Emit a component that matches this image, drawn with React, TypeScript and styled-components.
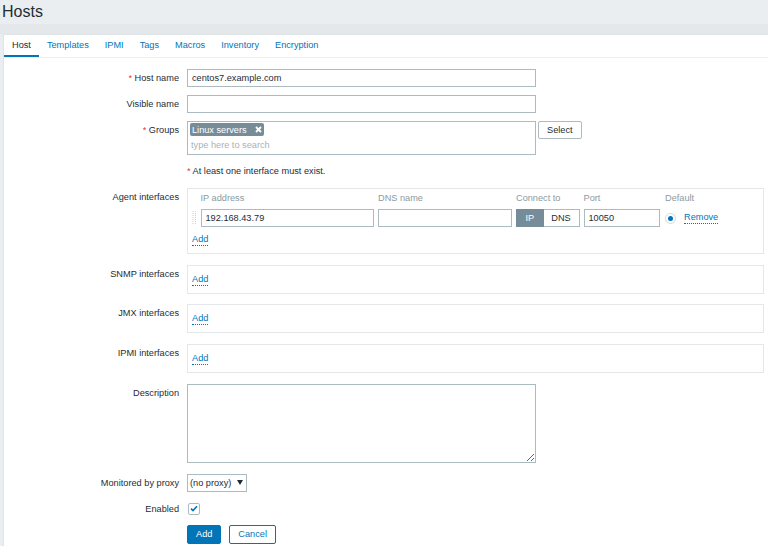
import styled, { createGlobalStyle } from "styled-components";

const BLUE = "#0275b8";
const TEXT = "#1f2c33";
const BORDER = "#acbbc2";
const SLATE = "#768d99";

const GlobalStyle = createGlobalStyle`
  html, body { margin: 0; padding: 0; }
  body {
    background: #ebeef0;
    font-family: "Liberation Sans", Arial, sans-serif;
    font-size: 9.2px;
    color: ${TEXT};
    width: 768px;
    height: 546px;
    overflow: hidden;
  }
`;

const Page = styled.div`
  display: flex;
  flex-direction: column;
  min-height: 546px;
`;

const Header = styled.h1`
  flex-shrink: 0;
  margin: 0;
  padding-left: 2px;
  height: 24px;
  line-height: 24px;
  font-size: 16px;
  font-weight: normal;
  color: ${TEXT};
`;

const Band = styled.div`
  flex-shrink: 0;
  height: 10px;
  background: #e5e8ea;
`;

const Panel = styled.div`
  flex: 1 0 auto;
  margin-left: 3px;
  background: #fff;
  border-left: 1px solid #dfe4e7;
  border-top: 1px solid #dfe4e7;
`;

const TabBar = styled.div`
  display: flex;
  height: 22px;
  border-bottom: 1px solid #ebeef0;
`;

const Tab = styled.div<{ $active?: boolean }>`
  padding: 0 8px;
  line-height: 20px;
  border-bottom: 2px solid ${(p) => (p.$active ? BLUE : "transparent")};
  color: ${(p) => (p.$active ? TEXT : BLUE)};
`;

const Form = styled.div`
  display: flex;
  flex-direction: column;
  padding-top: 11px;
`;

const Row = styled.div<{ $mb?: number }>`
  display: grid;
  grid-template-columns: 175px 1fr;
  column-gap: 8px;
  margin-bottom: ${(p) => p.$mb ?? 7.6}px;
`;

const Label = styled.div`
  text-align: right;
  line-height: 18.4px;
  white-space: nowrap;
`;

const Req = styled.span`
  color: #e33734;
`;

const TextInput = styled.input<{ $w?: number }>`
  display: block;
  box-sizing: border-box;
  width: ${(p) => p.$w ?? 349}px;
  height: ${(p) => (p.$w ? 18 : 18.4)}px;
  margin: 0;
  padding: 0 4px;
  border: 1px solid ${BORDER};
  border-radius: 0;
  background: #fff;
  font: inherit;
  color: ${TEXT};
  outline: none;
`;

const Inline = styled.div`
  display: flex;
  align-items: flex-start;
  gap: 2px;
`;

const MultiSelect = styled.div`
  box-sizing: border-box;
  width: 349px;
  height: 33.5px;
  padding: 1px 2px;
  border: 1px solid ${BORDER};
  background: #fff;
`;

const Chip = styled.span`
  display: inline-flex;
  align-items: center;
  gap: 8px;
  height: 13px;
  padding: 0 2px;
  margin-bottom: 2px;
  border-radius: 2px;
  background: ${SLATE};
  color: #fff;
`;

const Placeholder = styled.div`
  height: 14px;
  line-height: 14px;
  padding-left: 1px;
  color: #a7b3b9;
`;

const Button = styled.button<{ $primary?: boolean; $outline?: boolean }>`
  box-sizing: border-box;
  height: ${(p) => (p.$primary || p.$outline ? 19 : 18.4)}px;
  margin: 0;
  padding: 0 8px;
  border: 1px solid ${(p) => (p.$primary || p.$outline ? BLUE : BORDER)};
  border-radius: 2px;
  background: ${(p) => (p.$primary ? BLUE : "#fff")};
  color: ${(p) => (p.$primary ? "#fff" : p.$outline ? BLUE : TEXT)};
  font: inherit;
  line-height: 16px;
`;

const Note = styled.div`
  line-height: 18.4px;
`;

const IfaceBox = styled.div<{ $full?: boolean }>`
  box-sizing: border-box;
  width: 577px;
  height: ${(p) => (p.$full ? 66 : 29)}px;
  padding: ${(p) => (p.$full ? "3px 4px 7px" : "8px 4px 0")};
  border: 1px solid #e4e8ea;
  background: #fff;
`;

const IfaceGrid = styled.div`
  display: grid;
  grid-template-columns: 4.5px 173.5px 134px 63.5px 76.5px auto;
  column-gap: 4px;
  row-gap: 5px;
  align-items: center;
  margin-bottom: 7px;
`;

const Th = styled.div<{ $pl?: number }>`
  padding-left: ${(p) => p.$pl ?? 0}px;
  line-height: 12px;
  color: #8b9aa1;
  white-space: nowrap;
`;

const AddLink = styled.span`
  display: inline-block;
  line-height: 11px;
  color: ${BLUE};
  border-bottom: 1px dotted ${BLUE};
`;

const Toggle = styled.div`
  display: flex;
  height: 18px;
`;

const ToggleOpt = styled.div<{ $on?: boolean }>`
  box-sizing: border-box;
  display: flex;
  align-items: center;
  justify-content: center;
  width: ${(p) => (p.$on ? "27.5px" : "auto")};
  flex: ${(p) => (p.$on ? "none" : 1)};
  border: 1px solid ${(p) => (p.$on ? SLATE : BORDER)};
  border-left-width: ${(p) => (p.$on ? 1 : 0)}px;
  background: ${(p) => (p.$on ? SLATE : "#fff")};
  color: ${(p) => (p.$on ? "#fff" : TEXT)};
`;

const DefaultCell = styled.div`
  display: flex;
  align-items: center;
  gap: 8px;
  padding-left: 1px;
`;

const Radio = styled.span`
  position: relative;
  box-sizing: border-box;
  width: 11px;
  height: 11px;
  border: 1px solid #d3dade;
  border-radius: 50%;
  background: #fff;
  &::after {
    content: "";
    position: absolute;
    left: 2px;
    top: 2px;
    width: 5px;
    height: 5px;
    border-radius: 50%;
    background: ${BLUE};
  }
`;

const TextArea = styled.textarea`
  display: block;
  box-sizing: border-box;
  width: 349px;
  height: 79px;
  margin: 0;
  border: 1px solid ${BORDER};
  border-radius: 0;
  resize: both;
  font: inherit;
  outline: none;
`;

const Dropdown = styled.div`
  box-sizing: border-box;
  display: flex;
  align-items: center;
  justify-content: space-between;
  width: 60px;
  height: 18.4px;
  padding: 0 3px 0 2px;
  border: 1px solid ${BORDER};
  background: #fff;
`;

const CheckCell = styled.div`
  display: flex;
  align-items: center;
  height: 18.4px;
`;

const Checkbox = styled.span`
  box-sizing: border-box;
  display: flex;
  align-items: center;
  justify-content: center;
  width: 11.5px;
  height: 11.5px;
  margin-left: 1px;
  border: 1px solid ${BORDER};
  border-radius: 2px;
  background: #fff;
`;

const Buttons = styled.div`
  display: flex;
  gap: 8px;
`;

const tabs = ["Host", "Templates", "IPMI", "Tags", "Macros", "Inventory", "Encryption"];

const DragHandle = () => (
  <svg width="5" height="14" viewBox="0 0 5 14">
    {[0, 1, 2, 3, 4, 5, 6].map((i) => (
      <g key={i} fill="#c8cfd3">
        <rect x="0.5" y={i * 2} width="1" height="1" />
        <rect x="3" y={i * 2} width="1" height="1" />
      </g>
    ))}
  </svg>
);

const Cross = () => (
  <svg width="7" height="7" viewBox="0 0 7 7">
    <path d="M1 1L6 6M6 1L1 6" stroke="#fff" strokeWidth="1.8" />
  </svg>
);

const EmptyIface = () => (
  <IfaceBox>
    <AddLink>Add</AddLink>
  </IfaceBox>
);

export default function App() {
  return (
    <Page>
      <GlobalStyle />
      <Header>Hosts</Header>
      <Band />
      <Panel>
        <TabBar>
          {tabs.map((t, i) => (
            <Tab key={t} $active={i === 0}>
              {t}
            </Tab>
          ))}
        </TabBar>

        <Form>
          <Row>
            <Label>
              <Req>*</Req> Host name
            </Label>
            <TextInput readOnly value="centos7.example.com" />
          </Row>

          <Row>
            <Label>Visible name</Label>
            <TextInput readOnly value="" />
          </Row>

          <Row>
            <Label>
              <Req>*</Req> Groups
            </Label>
            <Inline>
              <MultiSelect>
                <Chip>
                  Linux servers
                  <Cross />
                </Chip>
                <Placeholder>type here to search</Placeholder>
              </MultiSelect>
              <Button>Select</Button>
            </Inline>
          </Row>

          <Row>
            <Label />
            <Note>
              <Req>*</Req> At least one interface must exist.
            </Note>
          </Row>

          <Row $mb={11}>
            <Label>Agent interfaces</Label>
            <IfaceBox $full>
              <IfaceGrid>
                <span />
                <Th>IP address</Th>
                <Th>DNS name</Th>
                <Th>Connect to</Th>
                <Th>Port</Th>
                <Th $pl={1}>Default</Th>

                <DragHandle />
                <TextInput $w={173.5} readOnly value="192.168.43.79" />
                <TextInput $w={134} readOnly value="" />
                <Toggle>
                  <ToggleOpt $on>IP</ToggleOpt>
                  <ToggleOpt>DNS</ToggleOpt>
                </Toggle>
                <TextInput $w={76.5} readOnly value="10050" />
                <DefaultCell>
                  <Radio />
                  <AddLink>Remove</AddLink>
                </DefaultCell>
              </IfaceGrid>
              <AddLink>Add</AddLink>
            </IfaceBox>
          </Row>

          <Row $mb={10}>
            <Label>SNMP interfaces</Label>
            <EmptyIface />
          </Row>

          <Row $mb={11}>
            <Label>JMX interfaces</Label>
            <EmptyIface />
          </Row>

          <Row $mb={10.5}>
            <Label>IPMI interfaces</Label>
            <EmptyIface />
          </Row>

          <Row $mb={11}>
            <Label>Description</Label>
            <TextArea readOnly value="" />
          </Row>

          <Row>
            <Label>Monitored by proxy</Label>
            <div>
              <Dropdown>
                <span>(no proxy)</span>
                <svg width="6" height="5" viewBox="0 0 6 5">
                  <path d="M0 0H6L3 5Z" fill={TEXT} />
                </svg>
              </Dropdown>
            </div>
          </Row>

          <Row $mb={6.6}>
            <Label>Enabled</Label>
            <CheckCell>
              <Checkbox>
                <svg width="8" height="7" viewBox="0 0 8 7">
                  <path d="M1 3.6L3 5.6L7 1.2" stroke={BLUE} strokeWidth="1.6" fill="none" />
                </svg>
              </Checkbox>
            </CheckCell>
          </Row>

          <Row>
            <Label />
            <Buttons>
              <Button $primary>Add</Button>
              <Button $outline>Cancel</Button>
            </Buttons>
          </Row>
        </Form>
      </Panel>
    </Page>
  );
}
